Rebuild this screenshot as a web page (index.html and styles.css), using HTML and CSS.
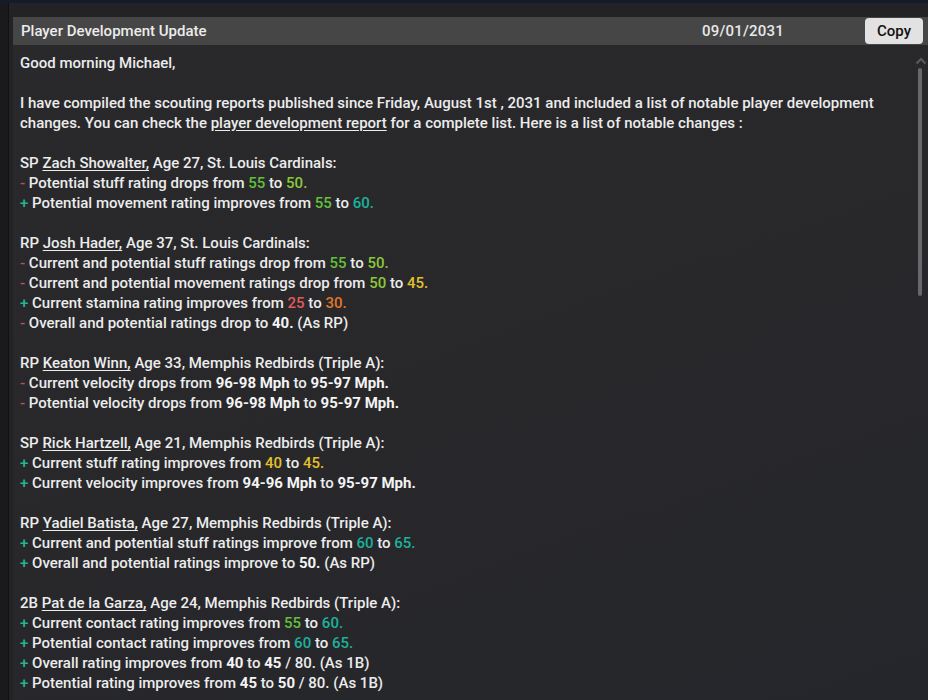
FILE: index.html
```html
<!DOCTYPE html>
<html>
<head>
<meta charset="utf-8">
<link rel="stylesheet" href="styles.css">
</head>
<body>
<div class="topline"></div>
<div class="app">
  <div class="sidebar"></div>
  <div class="main">
    <div class="panel">
      <div class="header">
        <div class="title">Player Development Update</div>
        <div class="date">09/01/2031</div>
        <button class="copy">Copy</button>
      </div>
      <div class="content">
        <div class="scroll">
          <p>Good morning Michael,</p>
          <p>I have compiled the scouting reports published since Friday, August 1st , 2031 and included a list of notable player development changes. You can check the <u>player development report</u> for a complete list. Here is a list of notable changes :</p>
          <p>SP <u>Zach Showalter,</u> Age 27, St. Louis Cardinals:<br>
          <span class="m">-</span> Potential stuff rating drops from <span class="g">55</span> to <span class="lg">50.</span><br>
          <span class="p">+</span> Potential movement rating improves from <span class="g">55</span> to <span class="t">60.</span></p>
          <p>RP <u>Josh Hader,</u> Age 37, St. Louis Cardinals:<br>
          <span class="m">-</span> Current and potential stuff ratings drop from <span class="g">55</span> to <span class="lg">50.</span><br>
          <span class="m">-</span> Current and potential movement ratings drop from <span class="lg">50</span> to <span class="y">45.</span><br>
          <span class="p">+</span> Current stamina rating improves from <span class="r">25</span> to <span class="o">30.</span><br>
          <span class="m">-</span> Overall and potential ratings drop to <b>40.</b> (As RP)</p>
          <p>RP <u>Keaton Winn,</u> Age 33, Memphis Redbirds (Triple A):<br>
          <span class="m">-</span> Current velocity drops from <b>96-98 Mph</b> to <b>95-97 Mph.</b><br>
          <span class="m">-</span> Potential velocity drops from <b>96-98 Mph</b> to <b>95-97 Mph.</b></p>
          <p>SP <u>Rick Hartzell,</u> Age 21, Memphis Redbirds (Triple A):<br>
          <span class="p">+</span> Current stuff rating improves from <span class="y">40</span> to <span class="y">45.</span><br>
          <span class="p">+</span> Current velocity improves from <b>94-96 Mph</b> to <b>95-97 Mph.</b></p>
          <p>RP <u>Yadiel Batista,</u> Age 27, Memphis Redbirds (Triple A):<br>
          <span class="p">+</span> Current and potential stuff ratings improve from <span class="t">60</span> to <span class="t">65.</span><br>
          <span class="p">+</span> Overall and potential ratings improve to <b>50.</b> (As RP)</p>
          <p>2B <u>Pat de la Garza,</u> Age 24, Memphis Redbirds (Triple A):<br>
          <span class="p">+</span> Current contact rating improves from <span class="g">55</span> to <span class="t">60.</span><br>
          <span class="p">+</span> Potential contact rating improves from <span class="t">60</span> to <span class="t">65.</span><br>
          <span class="p">+</span> Overall rating improves from <b>40</b> to <b>45</b> / 80. (As 1B)<br>
          <span class="p">+</span> Potential rating improves from <b>45</b> to <b>50</b> / 80. (As 1B)</p>
        </div>
        <div class="scrollbar">
          <svg class="arrow" width="12" height="8" viewBox="0 0 12 8"><path d="M1.5 6.5 L6 2 L10.5 6.5" fill="none" stroke="#5a5a5e" stroke-width="2"/></svg>
          <div class="thumb"></div>
        </div>
      </div>
    </div>
  </div>
</div>
</body>
</html>
```

FILE: styles.css
```css
html, body {
  margin: 0;
  padding: 0;
  height: 100%;
  overflow: hidden;
}
body {
  background: #1c1c1e;
  font-family: Roboto, "Noto Sans", sans-serif;
  font-size: 15px;
  font-weight: 500;
  color: #ececec;
}
.topline {
  height: 3px;
  background: #131b2c;
}
.app {
  display: flex;
  height: 697px;
}
.sidebar {
  width: 8px;
  background: #1a1a1c;
  border-right: 1px solid #111113;
}
.main {
  flex: 1;
  background: #232325;
  padding: 14px 0 0 4px;
  display: flex;
}
.panel {
  flex: 1;
  display: flex;
  flex-direction: column;
}
.header {
  height: 28px;
  background: #464646;
  display: flex;
  align-items: center;
  padding-left: 8px;
}
.title {
  flex: 1;
  color: #ececec;
  font-size: 15px;
}
.date {
  width: 120px;
  margin-right: 62px;
  text-align: center;
  color: #e8e8e8;
  font-size: 15px;
  letter-spacing: 0.2px;
}
.copy {
  width: 58px;
  height: 26px;
  margin-right: 5px;
  border: none;
  border-radius: 4px;
  background: #e2e2e2;
  color: #111;
  font-family: Roboto, sans-serif;
  font-size: 15px;
  font-weight: 500;
  padding: 0;
}
.content {
  flex: 1;
  position: relative;
  background: linear-gradient(160deg, #29292b 0%, #28282b 50%, #25262b 100%);
  overflow: hidden;
}
.scroll {
  padding: 8px 40px 0 7px;
  line-height: 20px;
}
.scroll p {
  margin: 0 0 20px 0;
}
u {
  text-decoration: underline;
  text-underline-offset: 2px;
}
b {
  font-weight: 700;
  color: #f4f4f4;
}
.m { color: #c0504f; }
.p { color: #26b392; }
.g { color: #62c03a; }
.lg { color: #8ac83a; }
.t { color: #1bb29a; }
.y { color: #e2c12c; }
.r { color: #e05a5a; }
.o { color: #e0782a; }
.scrollbar {
  position: absolute;
  right: 0;
  top: 12px;
  width: 14px;
}
.arrow {
  display: block;
  margin-left: 1px;
}
.thumb {
  width: 4px;
  height: 228px;
  margin: 3px 0 0 4px;
  background: #68686c;
  border-radius: 2px;
}
```
